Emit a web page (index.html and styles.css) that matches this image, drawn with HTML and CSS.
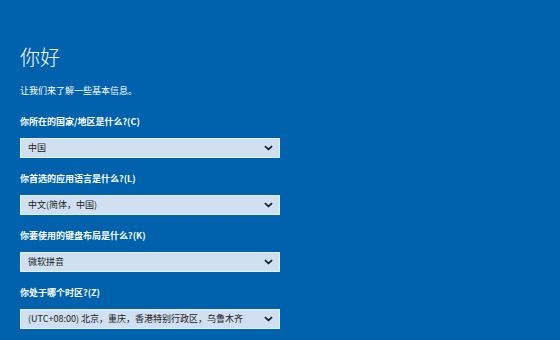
FILE: index.html
```html
<!DOCTYPE html>
<html lang="zh-CN">
<head>
<meta charset="utf-8">
<title>你好</title>
<link rel="stylesheet" href="styles.css">
</head>
<body>
<main class="page">
  <h1 class="title">你好</h1>
  <p class="intro">让我们来了解一些基本信息。</p>
  <div class="field">
    <div class="label">你所在的国家/地区是什么?(C)</div>
    <div class="select"><span class="value">中国</span><svg class="chev" viewBox="0 0 10 6" width="9" height="6"><path d="M1 1 L5 4.6 L9 1" fill="none" stroke="#111c2e" stroke-width="1.8"/></svg></div>
  </div>
  <div class="field">
    <div class="label">你首选的应用语言是什么?(L)</div>
    <div class="select"><span class="value">中文(简体，中国)</span><svg class="chev" viewBox="0 0 10 6" width="9" height="6"><path d="M1 1 L5 4.6 L9 1" fill="none" stroke="#111c2e" stroke-width="1.8"/></svg></div>
  </div>
  <div class="field">
    <div class="label">你要使用的键盘布局是什么?(K)</div>
    <div class="select"><span class="value">微软拼音</span><svg class="chev" viewBox="0 0 10 6" width="9" height="6"><path d="M1 1 L5 4.6 L9 1" fill="none" stroke="#111c2e" stroke-width="1.8"/></svg></div>
  </div>
  <div class="field">
    <div class="label">你处于哪个时区?(Z)</div>
    <div class="select"><span class="value">(UTC+08:00) 北京，重庆，香港特别行政区，乌鲁木齐</span><svg class="chev" viewBox="0 0 10 6" width="9" height="6"><path d="M1 1 L5 4.6 L9 1" fill="none" stroke="#111c2e" stroke-width="1.8"/></svg></div>
  </div>
</main>
</body>
</html>
```
FILE: styles.css
```css
html, body {
  margin: 0;
  padding: 0;
}
body {
  width: 560px;
  height: 340px;
  overflow: hidden;
  background: #0062ad;
  color: #ffffff;
  font-family: "Noto Sans CJK SC", "Noto Sans", sans-serif;
}
.page {
  padding: 43px 0 0 20px;
  width: 260px;
}
.title {
  margin: 0;
  font-size: 20px;
  line-height: 28px;
  font-weight: 300;
}
.intro {
  margin: 14px 0 0;
  font-size: 9px;
  line-height: 12px;
}
.field {
  margin-top: 19px;
}
.field + .field {
  margin-top: 15px;
}
.label {
  font-size: 9px;
  line-height: 12px;
  font-weight: 700;
}
.select {
  margin-top: 10px;
  height: 20px;
  box-sizing: border-box;
  background: #d0e0f1;
  border: 1px solid #e6f0fa;
  display: flex;
  align-items: center;
  justify-content: space-between;
  padding: 0 6px 0 7px;
  color: #1b1b1b;
}
.value {
  font-size: 9px;
  line-height: 12px;
  white-space: nowrap;
}
.chev {
  display: block;
}
```
